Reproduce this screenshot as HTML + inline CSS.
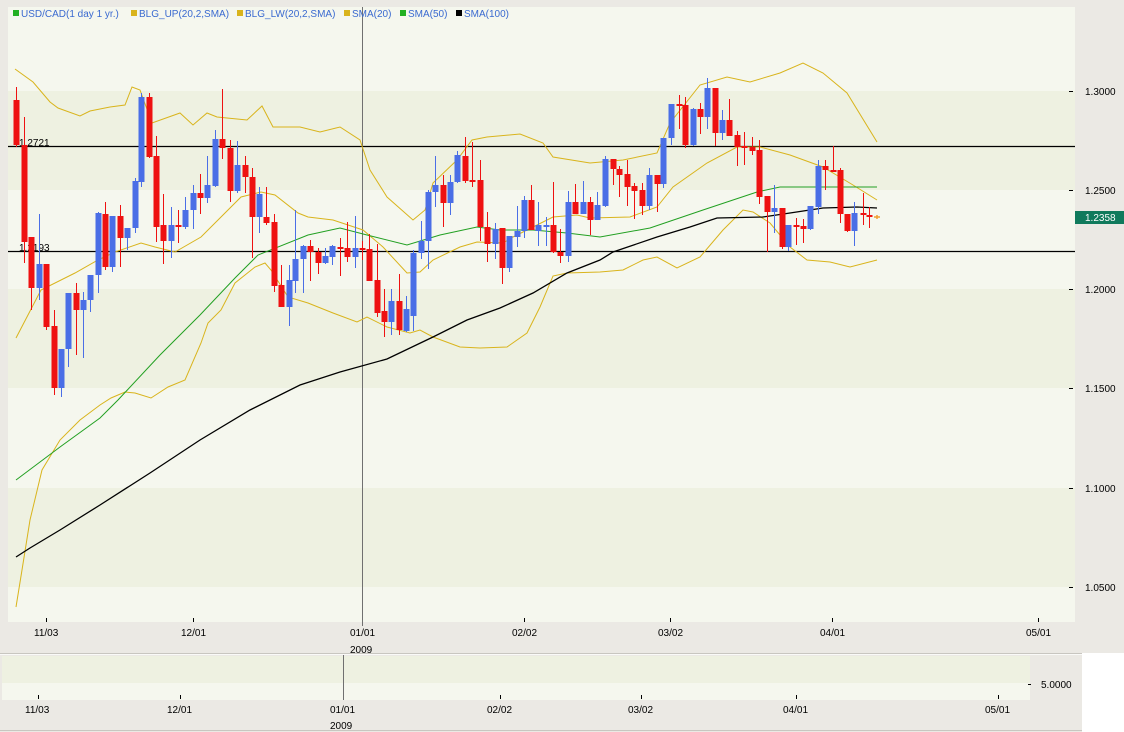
<!DOCTYPE html>
<html><head><meta charset="utf-8"><style>
html,body{margin:0;padding:0;background:#ebe9e4;}
body{width:1124px;height:732px;overflow:hidden;position:relative;font-family:"Liberation Sans",sans-serif;}
svg{position:absolute;left:0;top:0;}
text{font-family:"Liberation Sans",sans-serif;font-size:10px;}
</style></head><body>
<svg width="1124" height="732" viewBox="0 0 1124 732" xmlns="http://www.w3.org/2000/svg">
<rect x="0" y="0" width="1124" height="732" fill="#ebe9e4"/>
<!-- main plot bands -->
<rect x="8" y="7" width="1067" height="615" fill="#f5f7ee"/>
<rect x="8" y="91" width="1067" height="99" fill="#eef1e1"/>
<rect x="8" y="289" width="1067" height="99" fill="#eef1e1"/>
<rect x="8" y="488" width="1067" height="99" fill="#eef1e1"/>
<!-- vertical year line -->
<line x1="362.5" y1="7" x2="362.5" y2="626" stroke="#707070" stroke-width="1"/>
<!-- horizontal lines -->
<line x1="8" y1="146.5" x2="1075" y2="146.5" stroke="#000" stroke-width="1.2"/>
<line x1="8" y1="251.5" x2="1075" y2="251.5" stroke="#000" stroke-width="1.2"/>
<text x="19" y="146" fill="#000">1.2721</text>
<text x="19" y="251" fill="#000">1.2193</text>
<!-- indicator lines -->
<polyline fill="none" stroke="#d9b41c" stroke-width="1" points="15,69 33,82 50,102 58,108 80,116 90,111 110,107 125,105 132,87 140,90 152,123 180,113 193,125 207,113 217,117 247,120 262,106 273,127 293,127 300,127 320,132 340,127 360,140 370,170 387,197 413,220 425,210 433,183 457,160 472,140 487,137 520,134 543,143 553,157 590,163 623,160 657,153 670,123 700,85 727,77 750,82 780,73 803,63 823,73 847,93 877,142"/>
<polyline fill="none" stroke="#d9b41c" stroke-width="1" points="16,338 41,290 75,273 98,260 115,252 141,243 155,247 175,252 201,237 221,217 241,197 261,192 275,195 298,213 308,217 333,220 363,230 383,247 407,273 420,272 433,260 460,247 477,242 503,243 513,237 533,227 553,217 577,215 590,218 630,217 657,207 673,187 707,163 737,147 760,147 790,155 823,167 853,185 877,200"/>
<polyline fill="none" stroke="#d9b41c" stroke-width="1" points="16,607 22,570 30,520 42,470 60,440 80,420 100,405 111,398 125,392 135,393 151,398 168,387 185,380 201,343 208,323 221,310 235,283 255,267 265,263 271,270 288,297 308,303 333,313 357,322 367,317 387,327 410,333 420,330 433,337 460,347 480,348 507,347 527,333 540,307 553,276 567,273 600,272 623,270 643,260 657,257 677,268 700,257 723,230 743,210 753,212 770,223 790,247 807,260 830,262 850,267 877,260"/>
<polyline fill="none" stroke="#22a022" stroke-width="1" points="16,480 60,447 100,418 118,400 160,355 200,315 235,278 258,255 308,235 340,228 367,235 407,245 440,235 477,227 500,230 533,230 567,233 600,237 650,228 703,210 757,192 780,187 877,187"/>
<polyline fill="none" stroke="#000" stroke-width="1.3" points="16,557 30,548 60,530 100,505 150,473 200,440 250,410 300,385 340,372 387,359 433,337 467,320 500,308 533,293 567,273 600,260 613,252 657,237 690,227 717,218 763,217 790,213 823,208 857,207 877,208"/>
<g id="candles"></g>
<path d="M874,217 h6 M877,215 v4" stroke="#f0a030" stroke-width="1.5"/>
<!-- legend -->
<g>
<rect x="13" y="10" width="6" height="6" fill="#22b022"/><text x="21" y="17" fill="#3a6ad0">USD/CAD(1 day  1 yr.)</text>
<rect x="131" y="10" width="6" height="6" fill="#d9b41c"/><text x="139" y="17" fill="#3a6ad0">BLG_UP(20,2,SMA)</text>
<rect x="237" y="10" width="6" height="6" fill="#d9b41c"/><text x="245" y="17" fill="#3a6ad0">BLG_LW(20,2,SMA)</text>
<rect x="344" y="10" width="6" height="6" fill="#d9b41c"/><text x="352" y="17" fill="#3a6ad0">SMA(20)</text>
<rect x="400" y="10" width="6" height="6" fill="#22b022"/><text x="408" y="17" fill="#3a6ad0">SMA(50)</text>
<rect x="456" y="10" width="6" height="6" fill="#000"/><text x="464" y="17" fill="#3a6ad0">SMA(100)</text>
</g>
<!-- right axis -->
<g fill="#000">
<rect x="1069" y="91" width="4" height="1"/><text x="1085" y="95">1.3000</text>
<rect x="1069" y="190" width="4" height="1"/><text x="1085" y="194">1.2500</text>
<rect x="1069" y="289" width="4" height="1"/><text x="1085" y="293">1.2000</text>
<rect x="1069" y="388" width="4" height="1"/><text x="1085" y="392">1.1500</text>
<rect x="1069" y="488" width="4" height="1"/><text x="1085" y="492">1.1000</text>
<rect x="1069" y="587" width="4" height="1"/><text x="1085" y="591">1.0500</text>
</g>
<rect x="1075" y="211" width="49" height="13" fill="#107a5c"/>
<text x="1085" y="221" fill="#fff">1.2358</text>
<!-- date axis main -->
<g fill="#000">
<rect x="46" y="618" width="1" height="4"/><text x="34" y="636">11/03</text>
<rect x="193" y="618" width="1" height="4"/><text x="181" y="636">12/01</text>
<text x="350" y="636">01/01</text><text x="350" y="653">2009</text>
<rect x="524" y="618" width="1" height="4"/><text x="512" y="636">02/02</text>
<rect x="670" y="618" width="1" height="4"/><text x="658" y="636">03/02</text>
<rect x="832" y="618" width="1" height="4"/><text x="820" y="636">04/01</text>
<rect x="1038" y="618" width="1" height="4"/><text x="1026" y="636">05/01</text>
</g>
<!-- divider -->
<rect x="0" y="653" width="1082" height="1" fill="#c8c6c0"/>
<rect x="0" y="654" width="1082" height="1" fill="#fafaf8"/>
<rect x="1082" y="653" width="42" height="79" fill="#fff"/>
<!-- lower panel -->
<rect x="2" y="656" width="1028" height="44" fill="#f5f7ee"/>
<rect x="2" y="656" width="1028" height="27" fill="#eef1e1"/>
<line x1="343.5" y1="655" x2="343.5" y2="700" stroke="#707070"/>
<rect x="1028" y="684" width="3" height="1" fill="#000"/><text x="1041" y="688" fill="#000">5.0000</text>
<g fill="#000">
<rect x="38" y="695" width="1" height="4"/><text x="25" y="713">11/03</text>
<rect x="180" y="695" width="1" height="4"/><text x="167" y="713">12/01</text>
<text x="330" y="713">01/01</text><text x="330" y="729">2009</text>
<rect x="500" y="695" width="1" height="4"/><text x="487" y="713">02/02</text>
<rect x="641" y="695" width="1" height="4"/><text x="628" y="713">03/02</text>
<rect x="796" y="695" width="1" height="4"/><text x="783" y="713">04/01</text>
<rect x="998" y="695" width="1" height="4"/><text x="985" y="713">05/01</text>
</g>
<rect x="0" y="730" width="1082" height="1" fill="#c8c6c0"/>
</svg>
<script>
var d=[
[16,100,145,87,147,'r'],[24,145,242,117,263,'r'],[31,237,288,237,310,'r'],[39,264,288,214,300,'b'],[46,264,327,264,330,'r'],
[54,326,388,310,395,'r'],[61,349,388,349,397,'b'],[68,293,349,293,367,'b'],[76,293,310,283,355,'r'],[83,300,310,292,358,'b'],
[90,275,300,275,312,'b'],[98,213,275,212,293,'b'],[105,214,267,202,270,'r'],[112,216,267,216,272,'b'],[120,216,238,205,267,'r'],
[127,228,238,228,250,'b'],[135,181,228,178,233,'b'],[141,97,182,93,187,'b'],[149,97,157,93,158,'r'],[156,156,227,136,242,'r'],
[163,225,241,194,264,'r'],[171,225,241,207,258,'b'],[178,225,227,210,243,'r'],[185,210,227,197,229,'b'],[193,193,210,185,229,'b'],
[200,193,198,174,214,'r'],[207,185,198,156,203,'b'],[215,139,186,130,187,'b'],[222,139,148,89,159,'r'],[230,148,191,140,202,'r'],
[237,165,191,141,193,'b'],[245,165,177,156,193,'r'],[252,177,217,168,258,'r'],[259,194,217,187,233,'b'],[266,217,223,187,225,'r'],
[274,222,286,214,292,'r'],[281,285,307,265,307,'r'],[289,280,307,265,326,'b'],[295,259,281,210,293,'b'],[303,246,259,245,293,'b'],
[310,246,252,240,281,'r'],[318,252,263,248,274,'r'],[325,256,263,248,264,'b'],[332,246,257,245,265,'b'],[340,247,249,238,276,'r'],
[347,248,257,222,262,'r'],[355,248,257,216,268,'b'],[362,248,249,241,260,'r'],[369,249,281,234,281,'r'],[377,280,313,244,317,'r'],
[384,311,322,289,337,'r'],[391,301,322,289,335,'b'],[399,301,330,274,335,'r'],[406,309,331,296,332,'b'],[413,253,316,250,331,'b'],
[421,241,253,221,259,'b'],[428,192,241,190,269,'b'],[435,185,192,156,207,'b'],[443,185,203,175,227,'r'],[450,182,203,175,215,'b'],
[457,155,182,151,183,'b'],[465,156,181,137,183,'r'],[472,180,181,142,187,'r'],[480,180,227,160,241,'r'],[487,227,244,212,262,'r'],
[495,229,244,223,259,'b'],[502,228,268,228,284,'r'],[509,236,268,236,272,'b'],[517,231,237,206,247,'b'],[524,200,231,196,238,'b'],
[531,200,230,185,230,'r'],[538,225,231,202,246,'b'],[546,225,226,217,246,'b'],[553,225,252,182,253,'r'],[560,252,256,229,263,'r'],
[568,202,256,191,262,'b'],[575,202,214,184,214,'r'],[583,202,214,181,214,'b'],[590,202,220,197,235,'r'],[597,205,220,192,220,'b'],
[605,159,206,156,207,'b'],[613,159,169,159,185,'r'],[619,169,175,166,197,'r'],[627,174,187,160,206,'r'],[634,186,191,183,219,'r'],
[642,190,206,183,215,'r'],[649,175,206,168,210,'b'],[657,175,184,175,212,'r'],[663,138,184,138,188,'b'],[671,104,138,104,145,'b'],
[679,104,105,95,129,'r'],[685,105,145,97,148,'r'],[693,109,145,108,146,'b'],[700,109,117,103,134,'r'],[707,88,117,78,129,'b'],
[715,88,133,88,146,'r'],[722,120,133,110,140,'b'],[729,120,136,99,136,'r'],[737,135,147,131,166,'r'],[744,146,147,132,165,'r'],
[752,147,151,137,155,'r'],[759,150,197,140,204,'r'],[767,196,212,196,252,'r'],[774,208,212,185,233,'b'],[782,208,247,208,249,'r'],
[788,225,247,225,251,'b'],[796,225,226,218,245,'r'],[803,226,229,219,243,'r'],[810,206,229,206,230,'b'],[818,166,207,160,214,'b'],
[825,166,170,160,190,'r'],[833,170,171,146,171,'r'],[840,170,214,168,223,'r'],[847,214,231,214,232,'r'],[854,213,231,202,246,'b'],
[863,213,215,193,225,'r'],[869,215,217,207,228,'r']];
var g=document.getElementById('candles'),s='';
d.forEach(function(c){var col=c[5]=='r'?'#ee1111':'#4a6ee6';var h=Math.max(2,c[2]-c[1]);
s+='<rect x="'+c[0]+'" y="'+c[3]+'" width="1" height="'+(c[4]-c[3])+'" fill="'+col+'"/>';
s+='<rect x="'+(c[0]-2.5)+'" y="'+c[1]+'" width="6" height="'+h+'" fill="'+col+'"/>';});
g.innerHTML=s;
</script>
</body></html>
